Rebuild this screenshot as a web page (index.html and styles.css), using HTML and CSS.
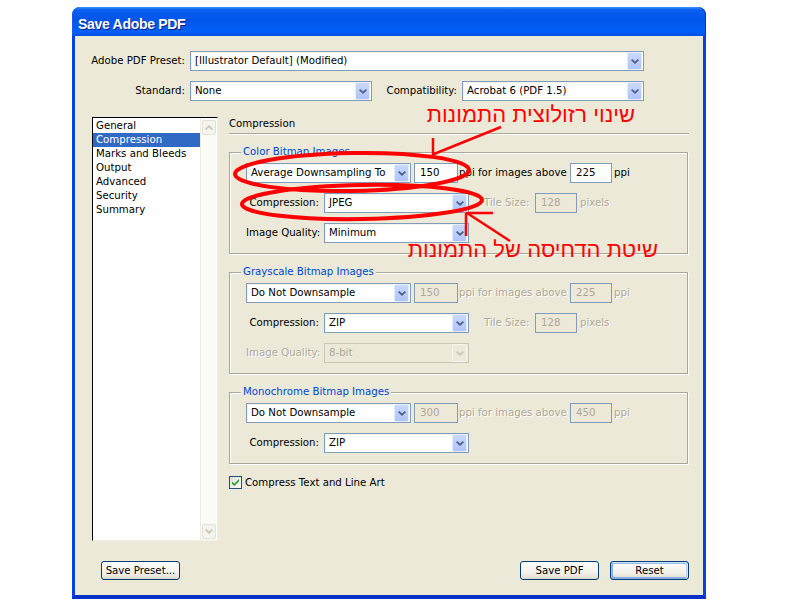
FILE: index.html
```html
<!DOCTYPE html>
<html>
<head>
<meta charset="utf-8">
<title>Save Adobe PDF</title>
<link rel="stylesheet" href="styles.css">
</head>
<body>
<svg class="defs" width="0" height="0" aria-hidden="true">
  <symbol id="chev" viewBox="0 0 8 5"><path d="M0 1.2 L1.2 0 L4 2.6 L6.8 0 L8 1.2 L4 5 Z"/></symbol>
  <symbol id="chevup" viewBox="0 0 8 5"><path d="M0 3.8 L1.2 5 L4 2.4 L6.8 5 L8 3.8 L4 0 Z"/></symbol>
</svg>
<div class="page">
  <div class="window">
    <div class="titlebar">Save Adobe PDF</div>
    <div class="client">
      <div class="row r1">
        <span class="lbl">Adobe PDF Preset:</span>
        <div class="sel w454"><span class="v">[Illustrator Default] (Modified)</span><span class="dd"><svg class="chev"><use href="#chev"/></svg></span></div>
      </div>
      <div class="row r2">
        <span class="lbl">Standard:</span>
        <div class="sel w182"><span class="v">None</span><span class="dd"><svg class="chev"><use href="#chev"/></svg></span></div>
        <span class="lbl lbl2">Compatibility:</span>
        <div class="sel w182"><span class="v">Acrobat 6 (PDF 1.5)</span><span class="dd"><svg class="chev"><use href="#chev"/></svg></span></div>
      </div>
      <div class="main">
        <div class="list">
          <ul class="items">
            <li>General</li>
            <li class="on">Compression</li>
            <li>Marks and Bleeds</li>
            <li>Output</li>
            <li>Advanced</li>
            <li>Security</li>
            <li>Summary</li>
          </ul>
          <div class="sb">
            <span class="sbbtn"><svg class="chev"><use href="#chevup"/></svg></span>
            <span class="sbbtn"><svg class="chev"><use href="#chev"/></svg></span>
          </div>
        </div>
        <div class="panel">
          <div class="phead">Compression</div>

          <div class="group">
            <span class="legend">Color Bitmap Images</span>
            <div class="grow">
              <div class="sel w165"><span class="v">Average Downsampling To</span><span class="dd"><svg class="chev"><use href="#chev"/></svg></span></div>
              <span class="inp w44 ml3">150</span>
              <span class="txt ppi">ppi for images above</span>
              <span class="inp w42">225</span>
              <span class="txt ml2">ppi</span>
            </div>
            <div class="grow">
              <span class="flbl">Compression:</span>
              <div class="sel w145"><span class="v">JPEG</span><span class="dd"><svg class="chev"><use href="#chev"/></svg></span></div>
              <span class="txt off tile">Tile Size:</span>
              <span class="inp w42 dis">128</span>
              <span class="txt off ml3">pixels</span>
            </div>
            <div class="grow">
              <span class="flbl">Image Quality:</span>
              <div class="sel w145"><span class="v">Minimum</span><span class="dd"><svg class="chev"><use href="#chev"/></svg></span></div>
            </div>
          </div>

          <div class="group">
            <span class="legend">Grayscale Bitmap Images</span>
            <div class="grow">
              <div class="sel w165"><span class="v">Do Not Downsample</span><span class="dd"><svg class="chev"><use href="#chev"/></svg></span></div>
              <span class="inp w44 ml3 dis">150</span>
              <span class="txt off ppi">ppi for images above</span>
              <span class="inp w42 dis">225</span>
              <span class="txt off ml2">ppi</span>
            </div>
            <div class="grow">
              <span class="flbl">Compression:</span>
              <div class="sel w145"><span class="v">ZIP</span><span class="dd"><svg class="chev"><use href="#chev"/></svg></span></div>
              <span class="txt off tile">Tile Size:</span>
              <span class="inp w42 dis">128</span>
              <span class="txt off ml3">pixels</span>
            </div>
            <div class="grow">
              <span class="flbl off">Image Quality:</span>
              <div class="sel w145 seloff"><span class="v">8-bit</span><span class="dd"><svg class="chev"><use href="#chev"/></svg></span></div>
            </div>
          </div>

          <div class="group">
            <span class="legend">Monochrome Bitmap Images</span>
            <div class="grow">
              <div class="sel w165"><span class="v">Do Not Downsample</span><span class="dd"><svg class="chev"><use href="#chev"/></svg></span></div>
              <span class="inp w44 ml3 dis">300</span>
              <span class="txt off ppi">ppi for images above</span>
              <span class="inp w42 dis">450</span>
              <span class="txt off ml2">ppi</span>
            </div>
            <div class="grow">
              <span class="flbl">Compression:</span>
              <div class="sel w145"><span class="v">ZIP</span><span class="dd"><svg class="chev"><use href="#chev"/></svg></span></div>
            </div>
          </div>

          <div class="chk">
            <span class="box"><svg width="11" height="11" viewBox="0 0 11 11"><path d="M2 4.5 L4.3 6.8 L9 2 L9 4.2 L4.3 9 L2 6.7 Z" fill="#21a121"/></svg></span>
            <span>Compress Text and Line Art</span>
          </div>
        </div>
      </div>
      <div class="btns">
        <span class="btn">Save Preset...</span>
        <span class="spacer"></span>
        <span class="btn">Save PDF</span>
        <span class="btn def">Reset</span>
      </div>
    </div>
  </div>

  <div class="annot">
    <svg class="marks" width="800" height="600" viewBox="0 0 800 600">
      <g fill="none" stroke="#ff0000">
        <ellipse cx="352" cy="172" rx="117" ry="19" stroke-width="4" transform="rotate(-1 352 172)"/>
        <ellipse cx="362" cy="202" rx="120" ry="17" stroke-width="4" transform="rotate(-1 362 202)"/>
        <path d="M501 127 L434 154 M433 138 L433 157" stroke-width="2.5"/>
        <path d="M510 241 L467 213 M466 213 L493 213 M466 213 L466 236" stroke-width="2.5"/>
      </g>
    </svg>
    <div class="note n1" dir="rtl" lang="he">שינוי רזולוצית התמונות</div>
    <div class="note n2" dir="rtl" lang="he">שיטת הדחיסה של התמונות</div>
  </div>
</div>
</body>
</html>
```

FILE: styles.css
```css
* { box-sizing: border-box; }
html, body { margin: 0; padding: 0; background: #fff; }
body {
  font-family: "DejaVu Sans", "Liberation Sans", sans-serif;
  font-size: 10.2px;
  color: #000;
}
.defs { position: absolute; width: 0; height: 0; overflow: hidden; }

.page {
  position: relative;
  width: 800px;
  height: 600px;
  overflow: hidden;
  padding: 7px 0 0 72px;
}

.window {
  width: 634px;
  height: 592px;
  display: flex;
  flex-direction: column;
}

.titlebar {
  flex: none;
  height: 29px;
  padding: 9px 0 0 6px;
  font: bold 14px/16px "Liberation Sans", sans-serif;
  letter-spacing: -0.3px;
  color: #fff;
  text-shadow: 1px 1px 0 #0a1f8a;
  border-radius: 8px 8px 0 0;
  background: linear-gradient(180deg, #3d95ff 0, #0a5ff0 10%, #0055ea 45%, #0060f8 85%, #0050e4 100%);
  box-shadow: inset 1px 0 0 #1a5be8, inset -1px 0 0 #0030c0;
}

.client {
  flex: 1;
  display: flex;
  flex-direction: column;
  background: #ece9d8;
  border: 3px solid #0841e0;
  border-top: 0;
  border-bottom-width: 4px;
  border-bottom-color: #0831c8;
}

.row { display: flex; align-items: center; height: 20px; flex: none; }
.r1 { margin-top: 15px; }
.r2 { margin-top: 10px; }
.lbl { flex: none; width: 110px; text-align: right; margin-right: 5px; line-height: 20px; white-space: nowrap; }
.lbl2 { width: 85px; }

/* combo box */
.sel {
  flex: none;
  display: flex;
  height: 20px;
  border: 1px solid #7f9db9;
  background: #fff;
}
.sel .v {
  flex: 1;
  min-width: 0;
  padding-left: 4px;
  line-height: 18px;
  white-space: nowrap;
  overflow: hidden;
  box-shadow: inset 1px 1px 0 #f4f3ee;
}
.sel .dd {
  flex: none;
  width: 15px;
  margin-right: 1px;
  display: flex;
  align-items: center;
  justify-content: center;
  border: 1px solid #e3ebfd;
  border-radius: 2px;
  background: linear-gradient(180deg, #cad9fd 0, #bccffc 50%, #aec4f9 100%);
}
.chev { width: 8px; height: 5px; fill: #4d6185; }
.seloff { border-color: #cbc7b8; background: #ece9d8; color: #aca899; }
.seloff .v { box-shadow: none; }
.seloff .dd { background: #ece9d8; border-color: #f4f3ee; }
.seloff .chev { fill: #c9c7ba; }

.w454 { width: 454px; }
.w182 { width: 182px; }
.w165 { width: 165px; }
.w145 { width: 145px; }
.w44 { width: 44px; }
.w42 { width: 42px; }
.ml2 { margin-left: 2px; }
.ml3 { margin-left: 3px; }

.inp {
  flex: none;
  height: 20px;
  border: 1px solid #7f9db9;
  background: #fff;
  padding-left: 5px;
  line-height: 18px;
}
.inp.dis { background: #ece9d8; color: #aca899; }

.txt { flex: none; white-space: nowrap; line-height: 20px; }
.ppi { width: 111px; margin-left: 1px; }
.tile { width: 51px; margin-left: 15px; }
.off { color: #aca899; text-shadow: 1px 1px 0 #fff; }

/* main area */
.main { display: flex; margin-top: 16px; flex: none; }

.list {
  flex: none;
  display: flex;
  width: 126px;
  height: 424px;
  margin-left: 17px;
  background: #fff;
  border: 1px solid;
  border-color: #000 #f1efe2 #f1efe2 #000;
}
.items {
  list-style: none;
  margin: 0;
  padding: 1px 0 0 0;
  width: 107px;
}
.items li { height: 14px; line-height: 14px; padding-left: 3px; white-space: nowrap; }
.items li.on { background: #316ac5; color: #fff; }

.sb {
  flex: none;
  width: 17px;
  display: flex;
  flex-direction: column;
  justify-content: space-between;
  padding: 2px 1px 1px 1px;
  background: #fbfbf7;
  border-left: 1px solid #ecebe4;
}
.sbbtn {
  width: 14px;
  height: 15px;
  display: flex;
  align-items: center;
  justify-content: center;
  border: 1px solid #e4e2d8;
  border-radius: 2px;
  background: #f4f3ee;
}
.sbbtn .chev { fill: #c9c7ba; }

.panel { flex: none; width: 459px; margin-left: 11px; }
.phead {
  height: 17px;
  line-height: 13px;
  border-bottom: 1px solid #aca899;
  box-shadow: 0 1px 0 #fff;
  margin-right: -1px;
}

.group {
  position: relative;
  margin-top: 18px;
  border: 1px solid #a7a698;
  box-shadow: inset 1px 1px 0 #fff, 1px 1px 0 #fff;
  padding: 10px 0 10px 16px;
  display: flex;
  flex-direction: column;
  gap: 10px;
}
.legend {
  position: absolute;
  left: 11px;
  top: -8px;
  padding: 0 2px;
  line-height: 13px;
  background: #ece9d8;
  color: #0046d5;
  white-space: nowrap;
}
.grow { display: flex; align-items: center; height: 20px; }
.flbl { flex: none; width: 73px; margin-right: 5px; text-align: right; white-space: nowrap; line-height: 20px; }

.chk { display: flex; align-items: center; height: 13px; margin-top: 12px; line-height: 15px; }
.box {
  flex: none;
  width: 13px;
  height: 13px;
  margin-right: 3px;
  border: 1px solid #1c5180;
  background: linear-gradient(135deg, #dcdcd7, #fff);
  display: flex;
  align-items: center;
  justify-content: center;
}

/* buttons */
.btns { display: flex; flex: none; height: 19px; margin-top: 20px; padding: 0 14px 0 26px; }
.spacer { flex: 1; }
.btn {
  flex: none;
  width: 79px;
  height: 19px;
  margin-left: 11px;
  border: 1px solid #003c74;
  border-radius: 3px;
  background: linear-gradient(180deg, #fff 0, #f2f1ec 60%, #e6e3d8 90%, #d6d0c5 100%);
  text-align: center;
  line-height: 17px;
}
.btn:first-child { margin-left: 0; }
.btn.def {
  box-shadow: inset -1px 1px 0 #cee7ff, inset 1px 2px 0 #98b8ea, inset -2px 2px 0 #bcd4f6, inset 1px -1px 0 #89ade4, inset 2px -2px 0 #89ade4;
}

/* red annotations */
.annot { position: absolute; left: 0; top: 0; width: 800px; height: 600px; pointer-events: none; }
.marks { position: absolute; left: 0; top: 0; }
.note {
  position: absolute;
  font: 22px/22px "Liberation Sans", "DejaVu Sans", sans-serif;
  color: #ff0000;
  white-space: nowrap;
}
.n1 { right: 165px; top: 104px; }
.n2 { right: 142px; top: 239px; }
```
